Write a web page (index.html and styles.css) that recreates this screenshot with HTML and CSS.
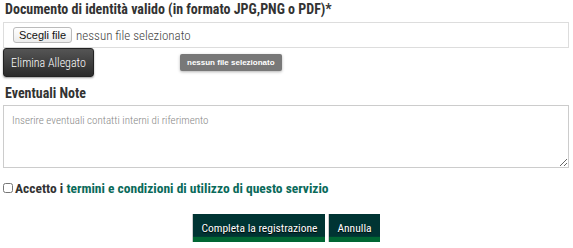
FILE: index.html
```html
<!DOCTYPE html>
<html lang="it">
<head>
    <meta charset="UTF-8">
    <meta name="viewport" content="width=device-width, initial-scale=1.0">
    <title>Registrazione</title>
    <link rel="stylesheet" href="styles.css">
</head>
<body>
    <form class="reg-form">
        <div class="field">
            <label class="field-label">Documento di identità valido (in formato JPG,PNG o PDF)*</label>
            <div class="file-box">
                <span class="file-btn">Scegli file</span>
                <span class="file-name">nessun file selezionato</span>
            </div>
            <div class="file-actions">
                <button type="button" class="dark-btn">Elimina Allegato</button>
                <span class="file-tip">nessun file selezionato</span>
            </div>
        </div>

        <div class="field">
            <label class="field-label">Eventuali Note</label>
            <textarea class="notes" placeholder="Inserire eventuali contatti interni di riferimento"></textarea>
        </div>

        <div class="terms">
            <input type="checkbox" id="accetto">
            <label for="accetto">Accetto i <a href="#">termini e condizioni di utilizzo di questo servizio</a></label>
        </div>

        <div class="form-actions">
            <button type="submit" class="green-btn">Completa la registrazione</button>
            <button type="button" class="green-btn">Annulla</button>
        </div>
    </form>
</body>
</html>
```

FILE: styles.css
```css
body {
    margin: 0;
    padding: 0 4px 0 3px;
    font-family: 'Roboto Condensed', 'Open Sans', sans-serif;
    color: #333;
    background: #fff;
}

.field-label {
    display: block;
    font-weight: bold;
    font-size: 14px;
    line-height: 17px;
    padding: 1px 0 0 2px;
    margin-bottom: 4px;
}

.field + .field .field-label {
    padding-top: 0;
    margin-bottom: 5px;
}

.file-box {
    display: flex;
    align-items: center;
    height: 24px;
    border: 1px solid #ddd;
    padding: 0 9px;
}

.file-btn {
    font-family: 'Liberation Sans', Arial, sans-serif;
    font-size: 11px;
    padding: 1px 5px;
    border: 1px solid #bbb;
    border-radius: 3px;
    background: linear-gradient(#fff, #ececec);
    color: #111;
}

.file-name {
    margin-left: 4px;
    font-size: 13px;
    font-weight: 300;
    color: #444;
}

.file-actions {
    display: flex;
    align-items: center;
    margin-bottom: 8px;
}

.dark-btn {
    width: 91px;
    height: 29px;
    padding: 0;
    border: 1px solid #222;
    border-radius: 3px;
    background: linear-gradient(#555, #2a2a2a);
    color: #fff;
    font-family: inherit;
    font-size: 12px;
    font-weight: 300;
    white-space: nowrap;
    box-shadow: 0 1px 2px rgba(0,0,0,0.4);
}

.file-tip {
    margin-left: 86px;
    padding: 4px 7px;
    background: #787878;
    color: #fff;
    font-family: 'Liberation Sans', Arial, sans-serif;
    font-size: 8px;
    font-weight: bold;
    border-radius: 2px;
    box-shadow: 0 1px 3px rgba(0,0,0,0.3);
}

.notes {
    display: block;
    box-sizing: border-box;
    width: 100%;
    height: 63px;
    margin-top: -2px;
    border: 1px solid #ccc;
    padding: 8px 8px;
    font-family: inherit;
    font-size: 11px;
    font-weight: 300;
    color: #333;
    resize: vertical;
}

.notes::placeholder {
    color: #888;
}

.terms {
    display: flex;
    align-items: center;
    margin-top: 12px;
    font-size: 13.5px;
    font-weight: bold;
}

.terms input {
    width: 10px;
    height: 10px;
    margin: 0 2px 0 0;
}

.terms a {
    color: #0a6a5a;
    text-decoration: none;
}

.form-actions {
    display: flex;
    justify-content: center;
    gap: 3px;
    margin-top: 18px;
}

.green-btn {
    height: 28px;
    padding: 0 8px;
    border: 1px solid #ccc;
    border-width: 0 0 0 1px;
    background: linear-gradient(#003433 80%, #006633 82%);
    color: #fff;
    font-family: inherit;
    font-size: 11.5px;
    text-shadow: 0 1px 1px #000;
}
```
